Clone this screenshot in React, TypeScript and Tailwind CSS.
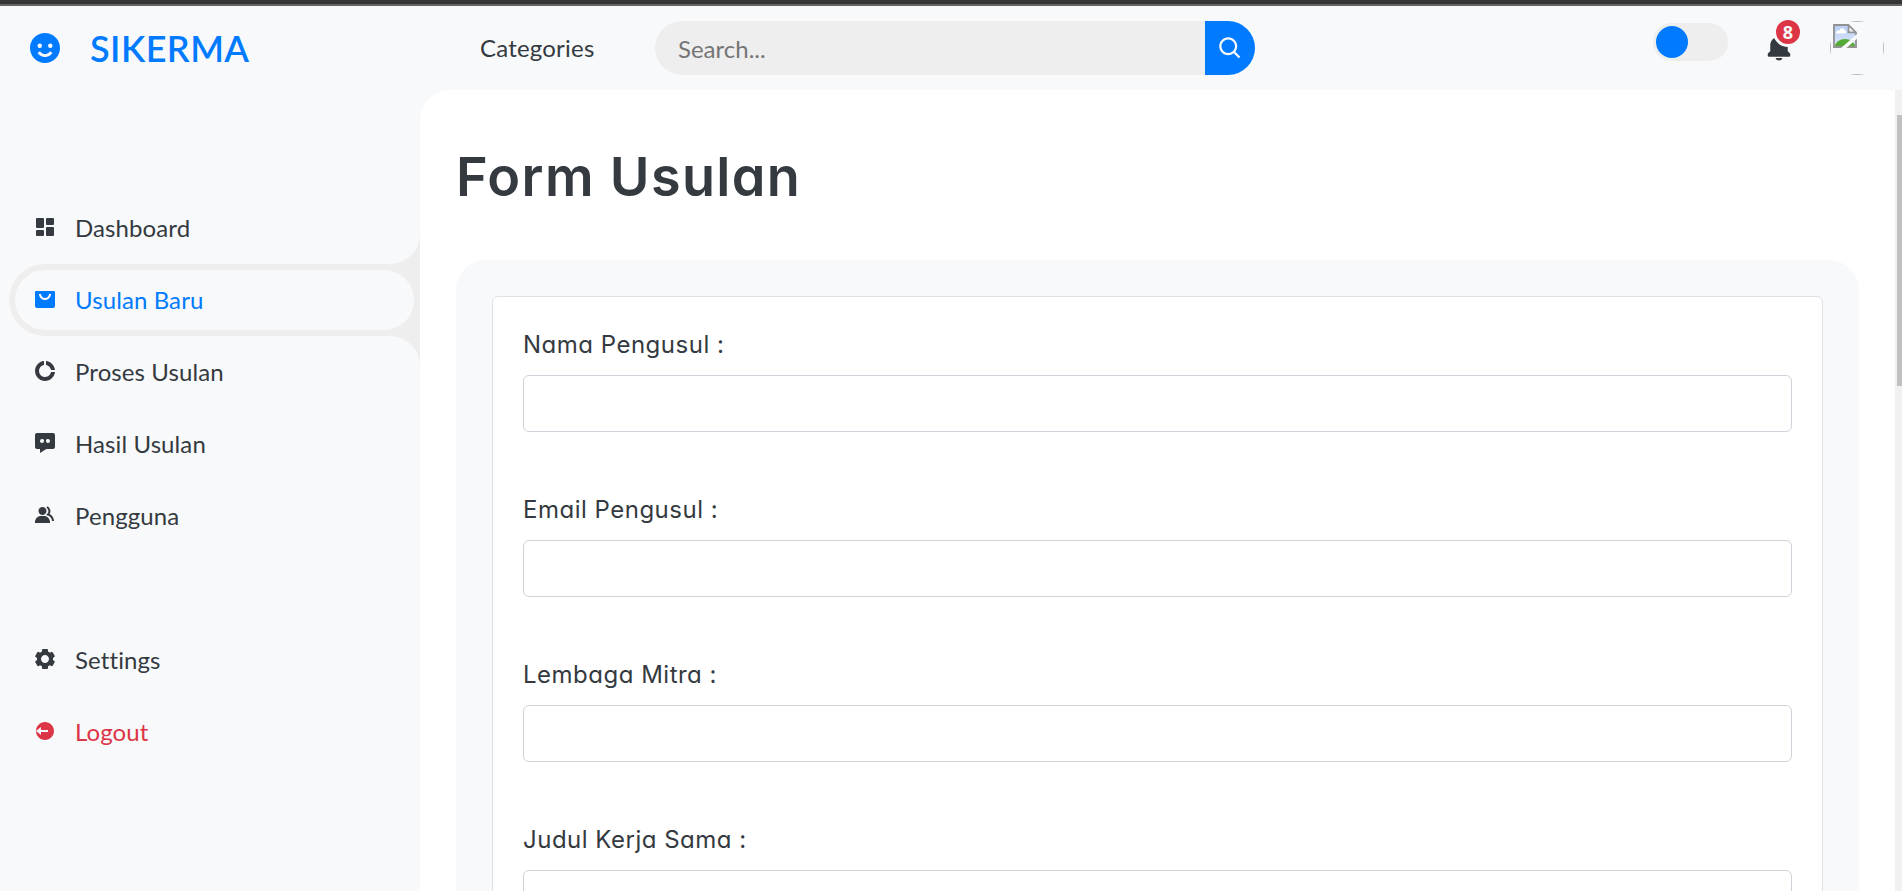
import type { ReactNode } from "react";
import {
  BiSearch,
  BiSolidBell,
  BiSolidCog,
  BiSolidDashboard,
  BiSolidDoughnutChart,
  BiSolidGroup,
  BiSolidLogOutCircle,
  BiSolidMessageDots,
  BiSolidShoppingBagAlt,
  BiSolidSmile,
} from "react-icons/bi";

type Item = { label: string; icon: ReactNode; active?: boolean; danger?: boolean };

const mainItems: Item[] = [
  { label: "Dashboard", icon: <BiSolidDashboard /> },
  { label: "Usulan Baru", icon: <BiSolidShoppingBagAlt />, active: true },
  { label: "Proses Usulan", icon: <BiSolidDoughnutChart /> },
  { label: "Hasil Usulan", icon: <BiSolidMessageDots /> },
  { label: "Pengguna", icon: <BiSolidGroup /> },
];

const footItems: Item[] = [
  { label: "Settings", icon: <BiSolidCog /> },
  { label: "Logout", icon: <BiSolidLogOutCircle />, danger: true },
];

const fields = ["Nama Pengusul :", "Email Pengusul :", "Lembaga Mitra :", "Judul Kerja Sama :"];

function MenuItem({ label, icon, active, danger }: Item) {
  const color = active ? "text-[#007bff]" : danger ? "text-[#dc3545]" : "text-[#343a40]";
  return (
    <li className={`relative ml-[9px] h-[72px] rounded-l-[36px] py-[6px] pl-[6px] ${active ? "bg-[#eeeeee]" : ""}`}>
      {active && (
        <>
          <svg className="absolute -top-[30px] right-0 h-[30px] w-[30px]" viewBox="0 0 30 30">
            <path d="M30 0A30 30 0 0 1 0 30H30Z" fill="#eeeeee" />
          </svg>
          <svg className="absolute -bottom-[30px] right-0 h-[30px] w-[30px]" viewBox="0 0 30 30">
            <path d="M0 0A30 30 0 0 1 30 30V0Z" fill="#eeeeee" />
          </svg>
        </>
      )}
      <a className={`mr-[6px] flex h-[60px] items-center rounded-full bg-[#f8f9fb] text-2xl tracking-[0.1px] ${color}`}>
        <span className="-mt-0.5 ml-[18px] flex w-[42px] shrink-0">{icon}</span>
        <span>{label}</span>
      </a>
    </li>
  );
}

function BrokenAvatar() {
  return (
    <svg className="h-[54px] w-[54px]" viewBox="0 0 54 54">
      <defs>
        <clipPath id="round">
          <circle cx="27" cy="27" r="27" />
        </clipPath>
        <clipPath id="sheet">
          <path d="M3 3H19L27 11V27H3Z" />
        </clipPath>
        <linearGradient id="sky" x1="0" y1="0" x2="0" y2="1">
          <stop offset="0" stopColor="#b9cdf3" />
          <stop offset="1" stopColor="#dde7fa" />
        </linearGradient>
      </defs>
      <rect x=".5" y=".5" width="53" height="53" fill="none" stroke="#b5b5b5" clipPath="url(#round)" />
      <g clipPath="url(#sheet)">
        <path d="M3 3H19L27 11V27H3Z" fill="url(#sky)" />
        <path d="M6 12.5C6 9.5 8.5 9 9.5 9.5C10.5 6 14.5 7 14.5 9.5C17 9.5 17 12.5 15 12.5Z" fill="#fff" />
        <ellipse cx="15" cy="25.5" rx="10" ry="7.5" fill="#55ab36" />
        <path d="M19 3V11H27" fill="#f4f4f4" />
        <path d="M4 4H18.6L26 11.4V26H4ZM18.5 4V11.3H26" fill="none" stroke="#929292" strokeWidth="1.8" />
        <path d="M28 14.5L12 28.5" stroke="#f8f9fb" strokeWidth="3.5" />
      </g>
    </svg>
  );
}

export default function App() {
  return (
    <div className="flex h-[891px] w-full flex-col overflow-hidden bg-[#f8f9fb] font-['Lato',sans-serif] text-[#343a40]">
      <div className="h-[6px] shrink-0 border-b-2 border-[#646464] bg-[#363636]" />
      <header className="flex h-[84px] shrink-0 items-center">
        <div className="flex w-[480px] shrink-0 items-center pl-[27px] text-[#007bff]">
          <BiSolidSmile className="h-9 w-9" />
          <span className="ml-[27px] text-4xl leading-none font-semibold tracking-[0.45px]">SIKERMA</span>
        </div>
        <span className="w-[175px] shrink-0 text-2xl tracking-[0.2px]">Categories</span>
        <form className="flex h-[54px] w-[600px] shrink-0 overflow-hidden rounded-full">
          <input
            className="min-w-0 flex-1 bg-[#eeeeee] pt-0.5 pl-[23px] text-2xl placeholder:text-[#757575]"
            placeholder="Search..."
          />
          <button type="button" className="flex w-[50px] items-center bg-[#007bff] pl-3 text-[#f8f9fb]">
            <BiSearch className="h-[27px] w-[27px]" />
          </button>
        </form>
        <div className="mr-[18px] ml-auto flex items-center">
          <span className="-mt-3 flex h-[38px] w-[75px] items-center rounded-full bg-[#eeeeee] pl-[3px]">
            <span className="h-8 w-8 rounded-full bg-[#007bff]" />
          </span>
          <span className="relative ml-[36px] flex w-[66px]">
            <BiSolidBell className="h-[30px] w-[30px]" />
            <span className="absolute -top-[16px] left-[9px] flex h-[30px] w-[30px] items-center justify-center rounded-full border-[3px] border-[#f8f9fb] bg-[#dc3545] pb-px font-['Open_Sans',sans-serif] text-lg leading-none font-bold text-[#f8f9fb]">
              8
            </span>
          </span>
          <BrokenAvatar />
        </div>
      </header>
      <div className="flex min-h-0 flex-1">
        <aside className="w-[420px] shrink-0 pt-[102px]">
          <ul>
            {mainItems.map((item) => (
              <MenuItem key={item.label} {...item} />
            ))}
          </ul>
          <ul className="mt-[72px]">
            {footItems.map((item) => (
              <MenuItem key={item.label} {...item} />
            ))}
          </ul>
        </aside>
        <main className="min-w-0 flex-1 overflow-hidden rounded-tl-[30px] bg-white px-9 pt-[54px] font-['Inter',sans-serif] [font-feature-settings:'cv11']">
          <h1 className="h-[116px] text-[54px] leading-[65px] font-semibold tracking-[1.35px]">Form Usulan</h1>
          <section className="rounded-[30px] bg-[#f8f9fb] p-9">
            <div className="rounded-md border border-[#dee2e6] bg-white px-[30px] pt-[30px]">
              {fields.map((label) => (
                <label key={label} className="flex h-[165px] flex-col text-2xl">
                  <span className="h-[48px] leading-[36px] tracking-[0.5px]">{label}</span>
                  <input className="h-[57px] w-full rounded-md border border-[#ced4da] bg-white px-4" />
                </label>
              ))}
            </div>
          </section>
        </main>
        <div className="w-[7px] shrink-0 bg-[#f1f1f1] pt-[25px] pl-[2px]">
          <div className="h-[271px] bg-[#c1c1c1]" />
        </div>
      </div>
    </div>
  );
}
